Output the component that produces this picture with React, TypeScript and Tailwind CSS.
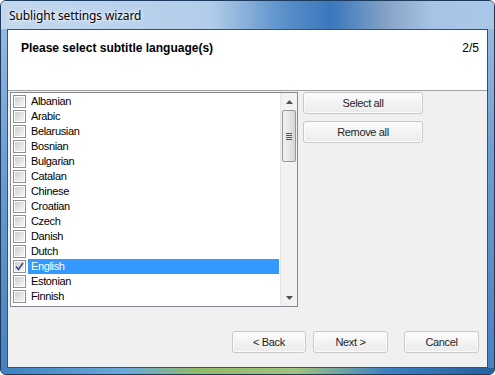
import React from "react";

const langs = [
  "Albanian",
  "Arabic",
  "Belarusian",
  "Bosnian",
  "Bulgarian",
  "Catalan",
  "Chinese",
  "Croatian",
  "Czech",
  "Danish",
  "Dutch",
  "English",
  "Estonian",
  "Finnish",
];

function CheckBox({ checked }: { checked?: boolean }) {
  return (
    <span className="w-[13px] h-[13px] shrink-0 border border-[#8e8f8f] bg-white p-[1px] flex">
      <span className="flex-1 bg-[linear-gradient(135deg,#cfcfcf,#f6f6f6)] flex items-center justify-center">
        {checked && (
          <svg width="9" height="9" viewBox="0 0 9 9">
            <path d="M1 4.5 L3.5 7.5 L8 1" fill="none" stroke="#3a4b82" strokeWidth="1.6" />
          </svg>
        )}
      </span>
    </span>
  );
}

function WinButton({ children, w }: { children: React.ReactNode; w: string }) {
  return (
    <div
      className={`${w} h-[22px] rounded-[3px] border border-[#c9c9c9] bg-[linear-gradient(to_bottom,#fdfdfd,#f3f3f3_50%,#ebebeb)] shadow-[inset_0_0_0_1px_#fbfbfb] flex items-center justify-center text-[11px] tracking-[-0.35px] text-[#1e1e1e] font-['Liberation_Sans',Arial,sans-serif]`}
    >
      {children}
    </div>
  );
}

export default function App() {
  return (
    <div className="w-[495px] h-[375px] bg-white">
      <div className="w-[495px] h-[375px] rounded-[6px] border border-[#1d3b5f] flex flex-col overflow-hidden bg-[linear-gradient(to_bottom,#9dbfe5,#6f9fd4_40%,#4681c0)]">
        {/* title bar */}
        <div className="h-[28px] shrink-0 flex bg-[#a9c6e7]">
          <div className="w-[210px] flex items-center pl-[8px] pt-[1px] bg-[linear-gradient(to_right,#c3d8ef,#b2cdea)]">
            <span className="text-[12px] text-black font-['Noto_Sans','Open_Sans',sans-serif] [text-shadow:0_0_6px_#ffffff,0_0_3px_#ffffff] tracking-[-0.1px]">
              Sublight settings wizard
            </span>
          </div>
          <div className="w-[70px] bg-[linear-gradient(to_right,#b2cdea,#5d92cb)]" />
          <div className="w-[50px] bg-[linear-gradient(to_right,#5d92cb,#3a77bb)]" />
          <div className="w-[60px] bg-[linear-gradient(to_right,#3a77bb,#8aa6c8)]" />
          <div className="flex-1 bg-[linear-gradient(to_right,#8aa6c8,#a6c4e6_40%,#a9c7e7)]" />
        </div>
        {/* middle */}
        <div className="flex-1 flex px-[6px] min-h-0">
          <div className="flex-1 border border-[#2f5279] bg-[#f0f0f0] flex flex-col font-['Liberation_Sans',Arial,sans-serif]">
            {/* header */}
            <div className="h-[61px] shrink-0 bg-white border-b border-[#a0a0a0] flex justify-between items-start pt-[11px] pl-[13px] pr-[8px]">
              <span className="text-[12px] leading-[14px] font-bold text-black">
                Please select subtitle language(s)
              </span>
              <span className="text-[12px] leading-[14px] text-black">2/5</span>
            </div>
            {/* body */}
            <div className="flex items-start pt-[1px] pl-[2px]">
              <div className="w-[288px] h-[215px] border border-[#828790] bg-white flex">
                <div className="flex-1 flex flex-col pt-[1px] pl-[2px] pr-[1px]">
                  {langs.map((l) => {
                    const sel = l === "English";
                    return (
                      <div key={l} className="h-[15px] flex items-center">
                        <CheckBox checked={sel} />
                        <span
                          className={`ml-[2px] flex-1 h-[15px] flex items-center pl-[3px] text-[11px] tracking-[-0.35px] ${
                            sel ? "bg-[#3399ff] text-white" : "text-black"
                          }`}
                        >
                          {l}
                        </span>
                      </div>
                    );
                  })}
                </div>
                {/* scrollbar */}
                <div className="w-[17px] bg-[#f2f2f2] border-l border-[#e6e6e6] flex flex-col items-center">
                  <div className="h-[17px] w-full flex items-center justify-center">
                    <svg width="7" height="4" viewBox="0 0 7 4">
                      <path d="M0 4 L3.5 0 L7 4 Z" fill="#505050" />
                    </svg>
                  </div>
                  <div className="w-[14px] h-[52px] rounded-[2px] border border-[#979797] bg-[linear-gradient(to_right,#f2f2f2,#e6e6e6_50%,#d4d4d4)] flex flex-col items-center justify-center gap-[1px]">
                    <span className="w-[6px] h-[1px] bg-[#555]" />
                    <span className="w-[6px] h-[1px] bg-[#555]" />
                    <span className="w-[6px] h-[1px] bg-[#555]" />
                    <span className="w-[6px] h-[1px] bg-[#555]" />
                  </div>
                  <div className="flex-1" />
                  <div className="h-[17px] w-full flex items-center justify-center">
                    <svg width="7" height="4" viewBox="0 0 7 4">
                      <path d="M0 0 L3.5 4 L7 0 Z" fill="#505050" />
                    </svg>
                  </div>
                </div>
              </div>
              <div className="ml-[5px] flex flex-col gap-[7px]">
                <WinButton w="w-[120px]">Select all</WinButton>
                <WinButton w="w-[120px]">Remove all</WinButton>
              </div>
            </div>
            {/* footer buttons */}
            <div className="mt-[24px] flex justify-end pr-[8px]">
              <WinButton w="w-[74px]">&lt; Back</WinButton>
              <div className="w-[7px]" />
              <WinButton w="w-[75px]">Next &gt;</WinButton>
              <div className="w-[16px]" />
              <WinButton w="w-[75px]">Cancel</WinButton>
            </div>
          </div>
        </div>
        {/* bottom frame */}
        <div className="h-[6px] shrink-0 bg-[linear-gradient(to_right,#3f80c0,#6aa8da_25%,#92b968_40%,#a3c27e_60%,#3f80c0_78%,#255f9f)]" />
      </div>
    </div>
  );
}
